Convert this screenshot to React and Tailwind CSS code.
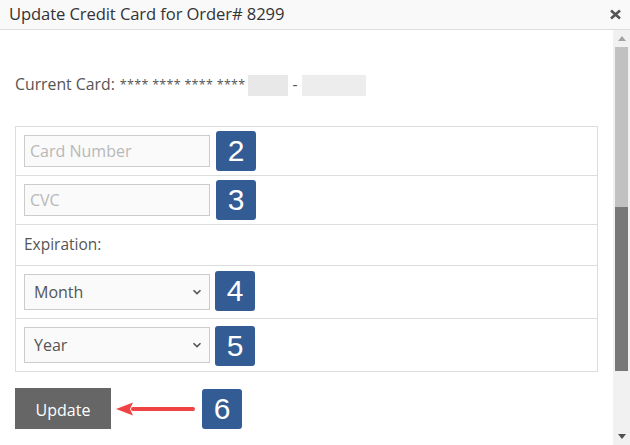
import React from 'react';

function Badge({ n, className = '' }) {
  return (
    <div className={`w-10 h-10 shrink-0 rounded-[3px] bg-[#335c94] text-white flex items-center justify-center text-[30px] leading-none ${className}`} style={{ fontFamily: 'Arial, "Liberation Sans", sans-serif' }}>
      {n}
    </div>
  );
}

function Chevron() {
  return (
    <svg width="10" height="6" viewBox="0 0 10 6" className="absolute right-[7px] top-1/2 -translate-y-1/2">
      <path d="M1.5 1.2 L5 4.6 L8.5 1.2" fill="none" stroke="#555" strokeWidth="1.6" />
    </svg>
  );
}

export default function App() {
  const font = { fontFamily: '"Open Sans", "Noto Sans", sans-serif' };
  return (
    <div className="w-[630px] h-[445px] overflow-hidden bg-white flex flex-col" style={font}>
      <div className="h-[30px] shrink-0 bg-[#f9f9f9] border-b border-[#dddddd] flex items-center justify-between pl-[9px] pr-[8px]">
        <h3 className="text-[16.6px] text-[#333] tracking-[-0.1px]">Update Credit Card for Order# 8299</h3>
        <svg width="13" height="11" viewBox="0 0 13 11">
          <path d="M2 1.5 L11 9.5 M11 1.5 L2 9.5" stroke="#555" strokeWidth="2.6" />
        </svg>
      </div>

      <div className="flex flex-1 min-h-0">
        <div className="flex-1 pl-[15px] pr-[15px]">
          <div className="h-[44px]" />
          <div className="flex items-center h-[22px] text-[15.8px] text-[#555]">
            <span>Current Card:</span>
            <span className="ml-[5px] text-[12.5px] tracking-[0.3px]">**** **** **** ****</span>
            <span className="ml-[3px] w-10 h-[21px] bg-[#e8e8e8]" />
            <span className="mx-[4px]">-</span>
            <span className="w-16 h-[21px] bg-[#ededed]" />
          </div>

          <div className="mt-[30px] border border-[#dddddd]">
            <div className="px-2 py-2 flex items-center border-b border-[#dddddd]">
              <input placeholder="Card Number" className="w-[186px] h-[32px] px-[5px] bg-[#fafafa] border border-[#cccccc] text-[16px] placeholder:text-[#b8b8b8] outline-none" />
              <Badge n="2" className="ml-[6px] -my-1" />
            </div>
            <div className="px-2 py-2 flex items-center border-b border-[#dddddd]">
              <input placeholder="CVC" className="w-[186px] h-[32px] px-[5px] bg-[#fafafa] border border-[#cccccc] text-[16px] placeholder:text-[#b8b8b8] outline-none" />
              <Badge n="3" className="ml-[6px] -my-1" />
            </div>
            <div className="px-2 py-2 h-[41px] flex items-center border-b border-[#dddddd] text-[15.5px] text-[#555]">
              Expiration:
            </div>
            <div className="px-2 py-2 flex items-center border-b border-[#dddddd]">
              <div className="relative w-[186px] h-[36px] bg-[#fafafa] border border-[#cccccc] flex items-center pl-[9px] text-[16px] text-[#555]">
                Month
                <Chevron />
              </div>
              <Badge n="4" className="ml-[5px] -mt-[3px] -mb-[1px]" />
            </div>
            <div className="px-2 py-2 flex items-center">
              <div className="relative w-[186px] h-[36px] bg-[#fafafa] border border-[#cccccc] flex items-center pl-[9px] text-[16px] text-[#555]">
                Year
                <Chevron />
              </div>
              <Badge n="5" className="ml-[5px] -mt-[1px] -mb-[3px]" />
            </div>
          </div>

          <div className="mt-[16px] flex items-center">
            <button className="w-24 h-[41px] pt-[2px] bg-[#666666] text-white text-[16px]">Update</button>
            <svg width="80" height="14" viewBox="0 0 80 14" className="ml-[5px]">
              <path d="M17 7 L77 7" stroke="#f04444" strokeWidth="4" strokeLinecap="round" />
              <path d="M0 7 L17 0.5 L14 7 L17 13.5 Z" fill="#f04444" />
            </svg>
            <Badge n="6" className="ml-[6px]" />
          </div>
        </div>

        <div className="w-[17px] shrink-0 bg-[#f1f1f1] flex flex-col items-center">
          <div className="h-[17px] flex items-center justify-center">
            <svg width="8" height="5" viewBox="0 0 8 5"><path d="M0 5 L4 0 L8 5 Z" fill="#a3a3a3" /></svg>
          </div>
          <div className="w-[13px] h-[160px] bg-[#c1c1c1]" />
          <div className="w-[13px] h-[164px] bg-[#787878]" />
          <div className="flex-1" />
          <div className="h-[17px] flex items-center justify-center">
            <svg width="8" height="5" viewBox="0 0 8 5"><path d="M0 0 L8 0 L4 5 Z" fill="#505050" /></svg>
          </div>
        </div>
      </div>
    </div>
  );
}
